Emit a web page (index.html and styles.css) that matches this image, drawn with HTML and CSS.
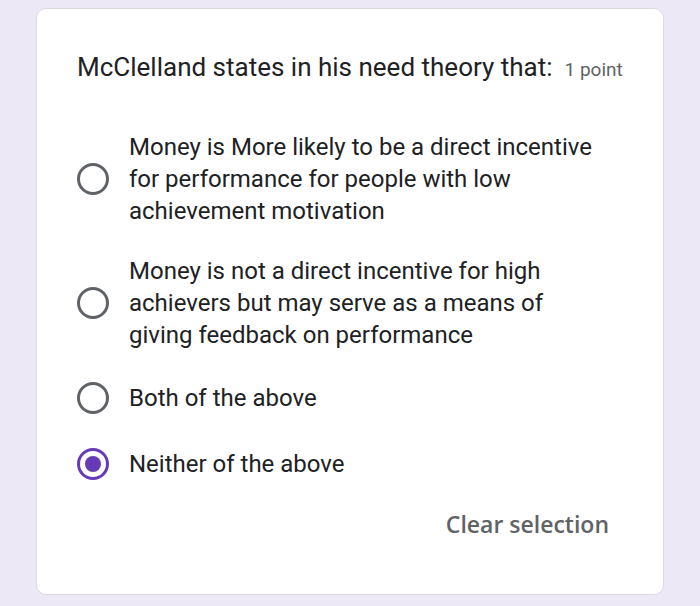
FILE: index.html
```html
<!DOCTYPE html>
<html>
<head>
<meta charset="utf-8">
<link rel="stylesheet" href="styles.css">
</head>
<body>
<div class="card">
  <div class="title"><span class="q">McClelland states in his need theory that:</span><span class="pts">1 point</span></div>
  <div class="options">
    <div class="opt"><span class="radio"></span><span class="label">Money is More likely to be a direct incentive for performance for people with low achievement motivation</span></div>
    <div class="opt"><span class="radio"></span><span class="label">Money is not a direct incentive for high achievers but may serve as a means of giving feedback on performance</span></div>
    <div class="opt single"><span class="radio"></span><span class="label">Both of the above</span></div>
    <div class="opt single"><span class="radio checked"></span><span class="label">Neither of the above</span></div>
  </div>
  <div class="clear-row"><span class="clear">Clear selection</span></div>
</div>
</body>
</html>
```
FILE: styles.css
```css
html, body { margin: 0; padding: 0; }
body {
  background: #ece8f6;
  width: 700px;
  height: 606px;
  box-sizing: border-box;
  padding: 8px 36px 11px 36px;
  font-family: Roboto, "Liberation Sans", sans-serif;
}
.card {
  background: #fff;
  border: 1px solid #dcd9e2;
  border-radius: 10px;
  height: 100%;
  box-sizing: border-box;
  padding: 42px 40px 0 40px;
  display: flex;
  flex-direction: column;
}
.title {
  display: flex;
  align-items: baseline;
  gap: 12px;
  line-height: 32px;
}
.q { font-size: 26px; color: #202124; }
.pts { font-size: 19px; color: #5f6368; }
.options {
  margin-top: 45px;
  display: flex;
  flex-direction: column;
  gap: 28px;
}
.opt {
  display: flex;
  align-items: center;
  gap: 20px;
}
.opt.single { padding: 3px 0; }
.radio {
  flex: none;
  width: 32px;
  height: 32px;
  box-sizing: border-box;
  border: 3px solid #5f6368;
  border-radius: 50%;
  position: relative;
}
.radio.checked { border-color: #673ab7; }
.radio.checked::after {
  content: "";
  position: absolute;
  left: 5px; top: 5px;
  width: 16px; height: 16px;
  border-radius: 50%;
  background: #673ab7;
}
.label {
  font-size: 24px;
  line-height: 32px;
  color: #202124;
  max-width: 470px;
}
.clear-row {
  margin-top: 25px;
  display: flex;
  justify-content: flex-end;
  padding-right: 14px;
}
.clear {
  font-family: "Open Sans", sans-serif;
  font-size: 23px;
  font-weight: 600;
  color: #5f6368;
  line-height: 32px;
}
```
